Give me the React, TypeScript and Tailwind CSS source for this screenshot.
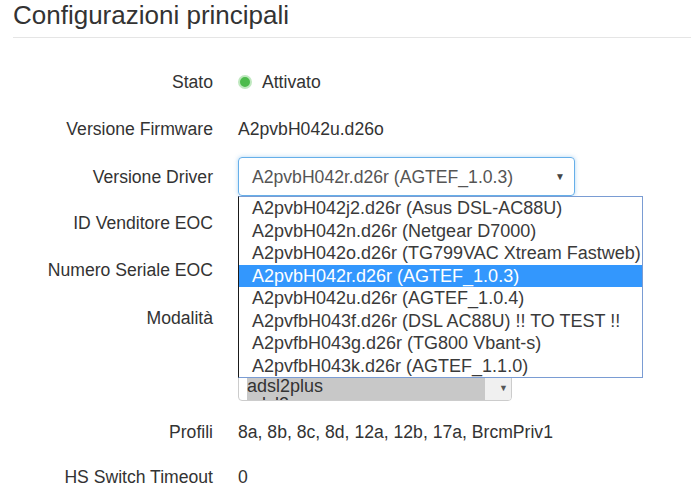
import React from 'react'

const driverOptions = [
  'A2pvbH042j2.d26r (Asus DSL-AC88U)',
  'A2pvbH042n.d26r (Netgear D7000)',
  'A2pvbH042o.d26r (TG799VAC Xtream Fastweb)',
  'A2pvbH042r.d26r (AGTEF_1.0.3)',
  'A2pvbH042u.d26r (AGTEF_1.0.4)',
  'A2pvfbH043f.d26r (DSL AC88U) !! TO TEST !!',
  'A2pvfbH043g.d26r (TG800 Vbant-s)',
  'A2pvfbH043k.d26r (AGTEF_1.1.0)',
]

const selectedDriver = 'A2pvbH042r.d26r (AGTEF_1.0.3)'

const modes = ['gdmt', 'glite', 't1413', 'adsl2', 'adsl2plus', 'vdsl2']
const selectedModes = ['adsl2plus', 'vdsl2']

function Row({ label, height, children }: { label: string; height: string; children?: React.ReactNode }) {
  return (
    <div className={`flex items-center ${height}`}>
      <div className="w-[200px] shrink-0 text-right">{label}</div>
      <div className="ml-[25px] flex items-center">{children}</div>
    </div>
  )
}

function DriverSelect() {
  return (
    <div className="relative">
      <div className="flex h-[39px] w-[337px] items-center justify-between rounded-[4px] border border-[#66afe9] pl-[13px] pr-[9px] text-[#555] shadow-[0_0_4px_rgba(102,175,233,0.5)]">
        <span>{selectedDriver}</span>
        <span className="text-[10px] leading-none text-[#444]">▼</span>
      </div>
      <ul className="absolute left-0 top-full z-10 w-[405px] border border-[#7a9cd3] border-l-[#1a1a1a] bg-white text-[18px] text-[#3a3a3a]">
        {driverOptions.map((opt) => (
          <li
            key={opt}
            className={`h-[22.5px] whitespace-nowrap pl-[13px] leading-[22.5px] ${
              opt === selectedDriver ? 'bg-[#3397fd] text-white' : ''
            }`}
          >
            {opt}
          </li>
        ))}
      </ul>
    </div>
  )
}

function ModeSelect() {
  return (
    <div className="flex h-[101px] w-[274px] overflow-hidden rounded-[4px] border border-[#ccc] bg-white">
      <div className="flex-1 overflow-hidden pl-[8px] pt-[4px] text-[18px] text-[#333]">
        {modes.map((m) => (
          <div key={m} className={`h-[18px] leading-[18px] ${selectedModes.includes(m) ? 'bg-[#c8c8c8]' : ''}`}>
            {m}
          </div>
        ))}
      </div>
      <div className="flex w-[26px] items-end justify-end bg-[#f0f0f0] pb-[7px] pr-[3px]">
        <span className="text-[9px] leading-none text-[#555]">▼</span>
      </div>
    </div>
  )
}

export default function App() {
  return (
    <div className="min-h-screen overflow-hidden bg-white pl-[13px] font-['Liberation_Sans',Arial,sans-serif] text-[17.6px] leading-[20px] text-[#333]">
      <h3 className="text-[26px] leading-[30px] text-[#333]">Configurazioni principali</h3>
      <div className="mt-[7px] border-t border-[#e5e5e5]" />

      <div className="mt-[19px]">
        <Row label="Stato" height="h-[49px]">
          <span className="block h-[14px] w-[14px] rounded-full border-[2px] border-[#bfe8bf] bg-[#4cbb4c]" />
          <span className="ml-[10px]">Attivato</span>
        </Row>
        <Row label="Versione Firmware" height="h-[46px]">
          <span>A2pvbH042u.d26o</span>
        </Row>
        <div className="relative z-10">
          <Row label="Versione Driver" height="h-[49px]">
            <DriverSelect />
          </Row>
        </div>
        <Row label="ID Venditore EOC" height="h-[44px]">
          <span>BDCM</span>
        </Row>
        <Row label="Numero Seriale EOC" height="h-[49px]">
          <span>0000000000</span>
        </Row>
        <div className="flex h-[116px] items-start">
          <div className="mt-[14px] w-[200px] shrink-0 text-right">Modalità</div>
          <div className="ml-[25px] mt-[6px]">
            <ModeSelect />
          </div>
        </div>
        <Row label="Profili" height="h-[43px]">
          <span>8a, 8b, 8c, 8d, 12a, 12b, 17a, BrcmPriv1</span>
        </Row>
        <Row label="HS Switch Timeout" height="h-[48px]">
          <span>0</span>
        </Row>
      </div>
    </div>
  )
}
